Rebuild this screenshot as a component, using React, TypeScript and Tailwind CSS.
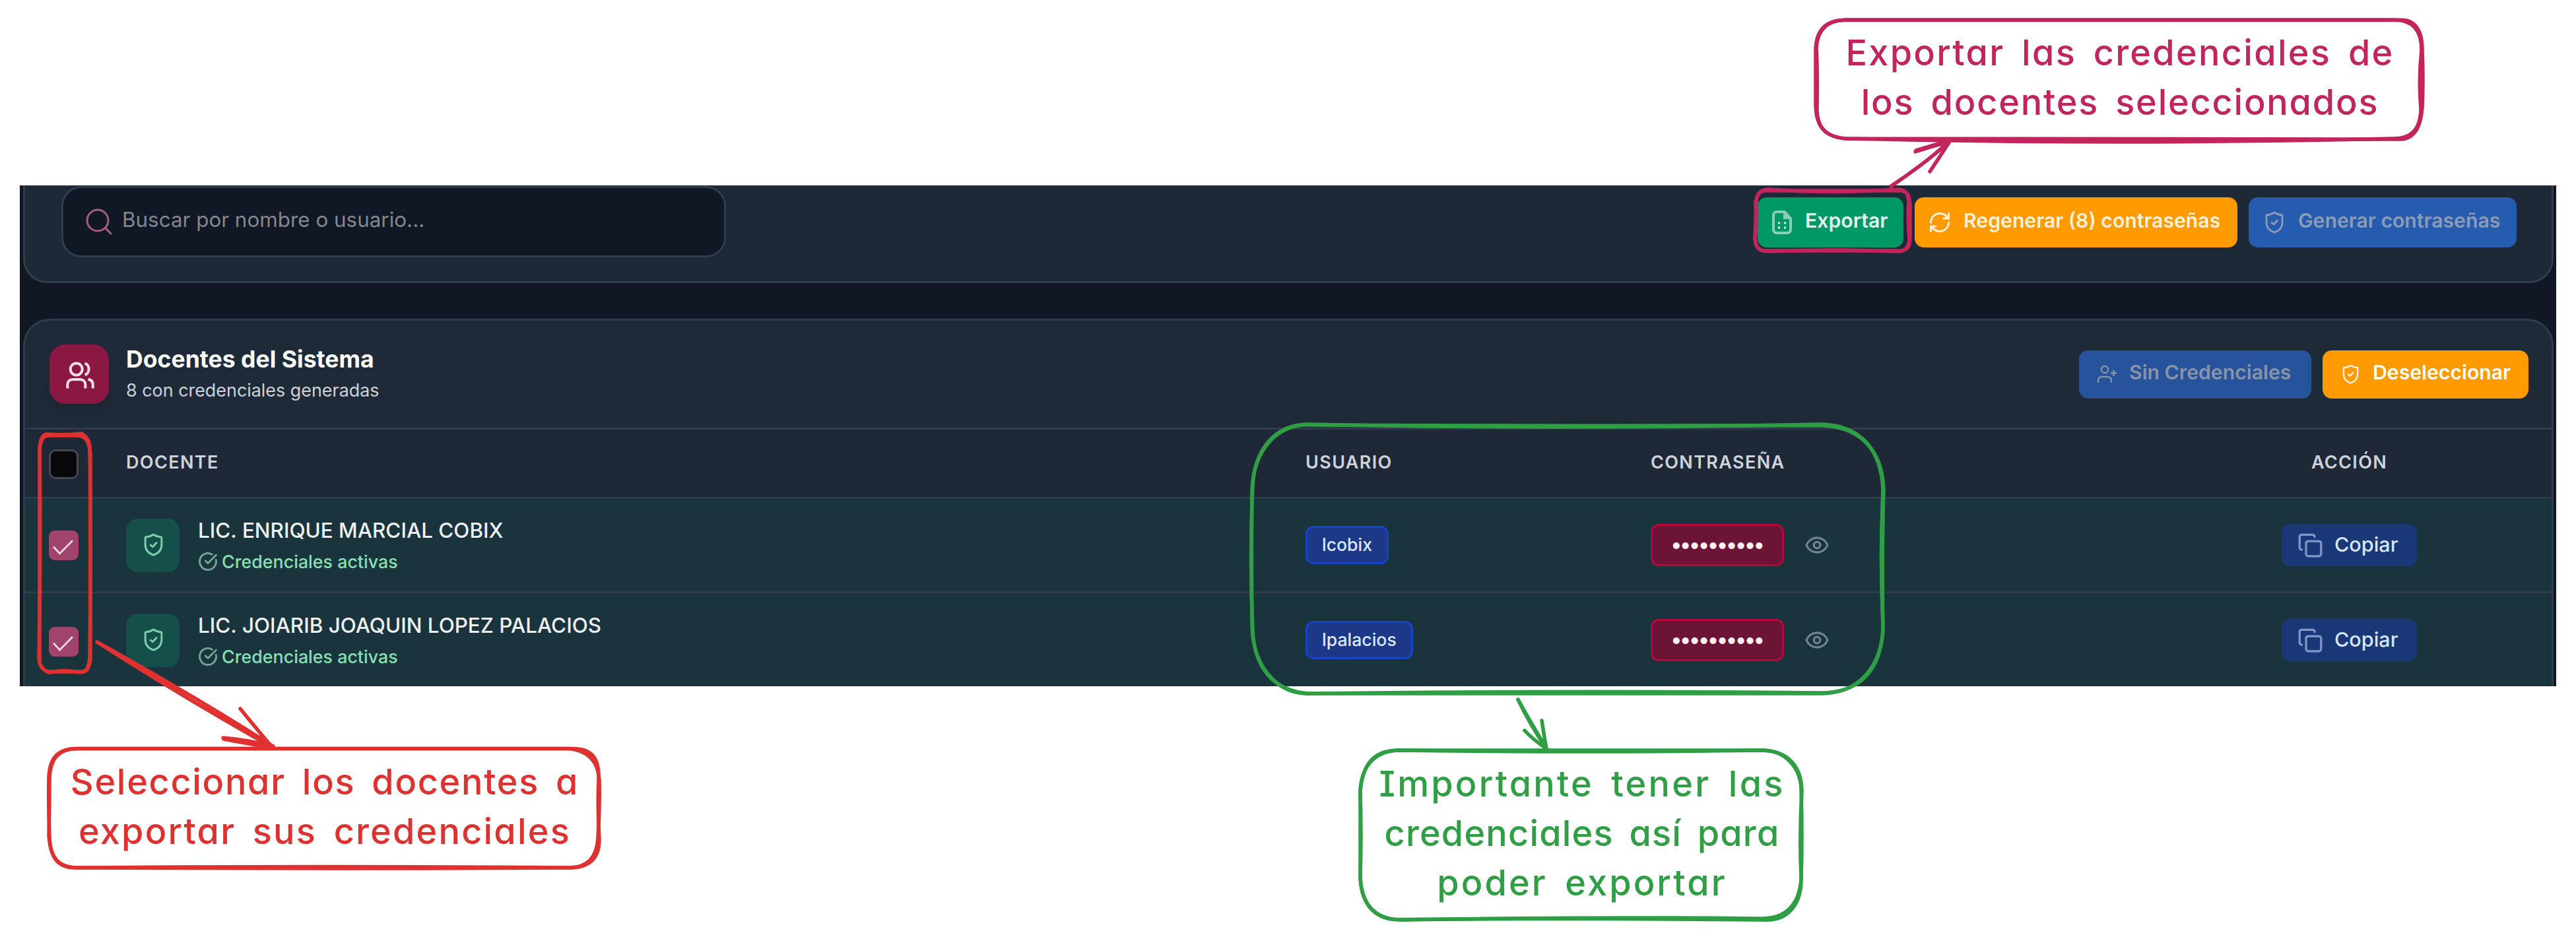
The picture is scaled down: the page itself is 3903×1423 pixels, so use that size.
import React from 'react';
import { CircleCheckBig, Copy, Eye, RefreshCw, Search } from 'lucide-react';

function ShieldIcon({ className }: { className: string }) {
  return (
    <svg viewBox="0 0 28 34" className={className} fill="none" stroke="currentColor" strokeWidth="2.8" strokeLinejoin="round">
      <path d="M14 2Q9 5.4 2 6v11c0 8 5.500 13 12 15.200C20.500 30 26 25 26 17V6Q19 5.400 14 2Z" />
      <path d="m9 16.800 4 3.200 6.200-6.600" />
    </svg>
  );
}

function UsersIcon() {
  return (
    <svg viewBox="0 0 90 90" className="size-[90px]" fill="none" stroke="currentColor" strokeWidth="4">
      <circle cx="40.700" cy="37.500" r="9" />
      <path d="M27.300 66.500V61c0-5 3-8 8-8h11c5 0 8 3 8 8v5.500" />
      <path d="M53.500 28.800c8 1.500 8 15.500 0 17.200M58.500 52.800c5 .7 7.200 4 7.200 8v5.700" />
    </svg>
  );
}

function SheetIcon() {
  return (
    <svg viewBox="0 0 30 36" className="h-[36px] w-[30px]" fill="none" stroke="currentColor" strokeWidth="4">
      <path d="M7 2h12l9 10v17a5 5 0 0 1-5 5H7a5 5 0 0 1-5-5V7a5 5 0 0 1 5-5Z" strokeLinejoin="round" />
      <path d="M17 3v10h10Z" fill="currentColor" stroke="none" />
      <path d="M9 19h3M18 19h3M9 26h3M18 26h3" stroke="#e2f5ee" strokeWidth="3" />
    </svg>
  );
}

function UserPlusIcon() {
  return (
    <svg viewBox="0 0 31 30" className="h-[30px] w-[31px]" fill="none" stroke="currentColor" strokeWidth="2.400">
      <circle cx="12" cy="8" r="5.200" />
      <path d="M2 28v-3c0-4 2.500-6 6-6h8c3.500 0 6 2 6 6v3M21 13.500h9M25.500 9v9" />
    </svg>
  );
}

function TopButton({ className, icon, label }: { className: string; icon: React.ReactNode; label: string }) {
  return (
    <button className={`flex items-center rounded-[14px] text-[30.200px] font-semibold whitespace-nowrap ${className}`}>
      {icon}
      <span className="pb-[5px] leading-none">{label}</span>
    </button>
  );
}

const teachers = [
  { name: 'LIC. ENRIQUE MARCIAL COBIX', user: 'lcobix', row: 'h-[143px] border-b-[3px] border-[#303b4b]', check: 'mt-0' },
  { name: 'LIC. JOIARIB JOAQUIN LOPEZ PALACIOS', user: 'lpalacios', row: 'h-[142px]', check: 'mt-[5px]' },
];

const columns = 'grid grid-cols-[153px_1787px_523px_752px_1fr] items-center';

function TeacherRow({ name, user, row, check }: (typeof teachers)[number]) {
  return (
    <div className={`${columns} bg-[#1a343d] ${row}`}>
      <div className={`ml-[36px] flex size-[45px] items-center justify-center rounded-[9px] bg-[#a1446b] text-[#efd3df] ${check}`}>
        <svg viewBox="0 0 45 45" className="size-[45px]" fill="none" stroke="currentColor" strokeWidth="2.800">
          <path d="m7 24.500 9.500 10.500L36 15" />
        </svg>
      </div>
      <div className="flex items-center">
        <div className="flex size-[81px] items-center justify-center rounded-[18px] bg-[#154f49] text-[#7fcfae]">
          <ShieldIcon className="h-[35px] w-[29px] translate-x-[1px] -translate-y-px" />
        </div>
        <div className="ml-[28px] pt-[3px]">
          <div className="text-[31.400px] leading-[47px] font-medium text-[#eef1f4]">{name}</div>
          <div className="flex items-center text-[26.800px] leading-[47px] font-medium text-[#86e0b4]">
            <CircleCheckBig size={30} strokeWidth={2.3} className="mr-[6px] text-[#72a797]" />
            {'Credenciales activas'}
          </div>
        </div>
      </div>
      <div>
        <span className="inline-flex h-[58px] items-center rounded-[12px] border-[3px] border-[#1743c8] bg-[#1c3887] px-[22px] align-middle text-[26.600px] font-medium text-[#dbe8fb]">
          {user}
        </span>
      </div>
      <div className="flex items-center">
        <span className="flex h-[64px] w-[202px] items-center justify-center rounded-[12px] border-[3px] border-[#b5073c] bg-[#6b1436] pb-[2px] text-[32px] font-bold tracking-[-1.200px] text-[#fff1f2]">
          ••••••••••
        </span>
        <Eye size={38} strokeWidth={2} className="ml-[31px] text-[#748390]" />
      </div>
      <div className="flex justify-center">
        <button className="flex h-[64px] w-[205px] items-center gap-[17px] rounded-[13px] bg-[#1a3878] pl-[24px] text-[30.500px] font-medium text-[#d5e6fb]">
          <Copy size={39} strokeWidth={2} className="text-[#8197c6]" />
          <span className="pb-[2px] leading-none">Copiar</span>
        </button>
      </div>
    </div>
  );
}

const hand = 'absolute text-center text-[54px] leading-[75px] font-medium whitespace-nowrap [font-feature-settings:"cv11","cv08"]';

/* Hand-drawn frames, arrows and notes laid over the panel. */
function Annotations() {
  return (
    <>
      <svg viewBox="0 0 3903 1423" className="absolute inset-0 h-[1423px] w-[3903px]" fill="none" strokeLinecap="round" strokeLinejoin="round">
        <g stroke="#c2255c" strokeWidth="5.500">
          <path d="M2798 30H3628C3656 30 3669 46 3669 76Q3664 120 3668 165C3667 196 3654 210 3626 210Q3210 220 2798 210C2766 208 2752 194 2753 160Q2754 110 2752 72C2754 44 2770 30 2798 30Z" />
          <path d="M2796 30.500H3634C3660 28 3671 48 3670 78Q3672 120 3670 163C3668 190 3660 212 3634 211Q3210 212 2796 210C2762 207 2751 188 2751 158Q2751 110 2751 74C2752 46 2766 30 2796 30.500Z" />
          <path d="M2678 287Q2776 294 2876 287C2890 288 2891 296 2892 306Q2890 335 2893 362C2892 376 2886 381 2874 381Q2776 377 2678 381C2664 380 2660 374 2659 362Q2663 335 2661 306C2662 294 2666 288 2678 287Z" />
          <path d="M2676 289H2878C2892 289 2893 298 2894 310V358C2894 374 2890 381 2876 380H2676C2662 381 2660 372 2659 358Q2661 330 2660 308C2661 296 2666 289 2676 289Z" />
          <path d="M2866 282Q2915 248 2953 216M2865 282Q2920 246 2953 214M2902 230Q2926 222 2952 215M2903 228L2950 214M2924 260Q2940 236 2953 216" />
        </g>
        <g stroke="#e03131" strokeWidth="5.500">
          <path d="M118 1134.500H866C896 1134 908 1148 907 1180Q905 1225 908 1272C908 1304 890 1315 862 1315Q490 1312 120 1315C88 1315 76 1300 75 1268Q73 1225 74 1176C76 1144 92 1134 118 1134.500Z" />
          <path d="M116 1134.500H862C890 1137 906 1152 908 1182Q909 1225 906 1270C904 1300 890 1315 862 1315Q490 1317 116 1315C86 1316 76 1298 74 1266Q75 1225 75 1180C76 1150 88 1135 116 1134.500Z" />
          <path d="M70 658Q98 660 124 657C134 664 137 672 136 684Q138 840 136 996C135 1010 132 1018 122 1019Q98 1014 74 1019C64 1014 59 1008 59 998Q62 840 60 684C60 672 62 660 70 658Z" />
          <path d="M74 660H120C132 662 135 672 137 688V1000C134 1014 132 1018 124 1018H72C64 1014 60 1010 60 1000V680C62 666 66 660 74 660Z" />
          <path d="M147 973Q280 1058 412 1132M147 973Q290 1052 414 1131M364 1074Q385 1100 412 1132M338 1118Q375 1121 412 1131M339 1120L410 1133" />
        </g>
        <g stroke="#2f9e44" strokeWidth="5.500">
          <path d="M1984 643Q2370 651 2758 643C2822 644 2850 684 2853 742Q2848 845 2853 952C2850 1014 2820 1050 2758 1050Q2370 1046 1984 1051C1928 1048 1900 1010 1898 954Q1893 845 1898 738C1900 684 1930 642 1984 643Z" />
          <path d="M1990 644Q2370 646 2758 644.500C2816 646 2852 680 2854 742Q2851 845 2853 954C2850 1010 2816 1052 2758 1051H1988C1932 1054 1898 1006 1897 948Q1896 845 1897 742C1900 680 1936 640 1990 644Z" />
          <path d="M2124 1137H2670C2708 1138 2730 1160 2730 1200Q2726 1265 2729 1332C2726 1372 2706 1393 2666 1392Q2395 1389 2124 1394C2082 1394 2063 1370 2061 1330Q2063 1265 2061 1196C2064 1158 2086 1136 2124 1137Z" />
          <path d="M2116 1137Q2395 1141 2672 1137C2706 1138 2728 1164 2729 1196Q2731 1265 2729 1336C2728 1372 2708 1396 2672 1394Q2395 1391 2116 1393.500C2080 1392 2062 1366 2061 1328V1200C2064 1160 2080 1138 2116 1137Z" />
          <path d="M2300 1060Q2318 1098 2343 1134M2300 1060Q2320 1096 2343 1134M2336 1092Q2339 1112 2343 1134M2310 1107Q2322 1120 2342 1134" />
        </g>
      </svg>
      <div className={`${hand} top-[42px] left-[2752px] w-[920px] text-[#c2255c]`}>
        <div className="tracking-[2.300px] [word-spacing:9px]">Exportar las credenciales de</div>
        <div className="tracking-[1.800px] [word-spacing:9px]">los docentes seleccionados</div>
      </div>
      <div className={`${hand} top-[1147px] left-[74px] w-[836px] text-[#e03131]`}>
        <div className="tracking-[1.700px] [word-spacing:9px]">Seleccionar los docentes a</div>
        <div className="tracking-[2.200px] [word-spacing:9px]">exportar sus credenciales</div>
      </div>
      <div className={`${hand} top-[1150px] left-[2061px] w-[672px] text-[#2f9e44]`}>
        <div className="tracking-[3.200px] [word-spacing:9px]">Importante tener las</div>
        <div className="tracking-[1.200px] [word-spacing:8px]">credenciales así para</div>
        <div className="tracking-[3.100px] [word-spacing:9px]">poder exportar</div>
      </div>
    </>
  );
}

export default function App() {
  return (
    <div className="relative h-[1423px] w-[3903px] overflow-hidden bg-white pt-[281px] pl-[30px] font-['Inter',sans-serif]">
      <main className="h-[759px] w-[3843px] overflow-hidden bg-[#101725] pr-[4px] pl-[5px]">
        <section className="flex h-[148px] items-start rounded-b-[36px] border-[3px] border-t-0 border-[#303b4b] bg-[#1e2938] pr-[53px] pl-[55px]">
          <div className="mt-px flex h-[108px] w-[1007px] items-center rounded-[30px] border-[3px] border-[#303b4b] bg-[#101725] pl-[30px]">
            <Search size={48} strokeWidth={1.5} className="text-[#a65f7b]" />
            <span className="ml-[11px] pb-[4px] text-[31.400px] text-[#84878f]">Buscar por nombre o usuario...</span>
          </div>
          <div className="mt-[18px] ml-auto flex gap-[17px]">
            <TopButton
              className="h-[76px] w-[221px] gap-[20px] bg-[#009966] pl-[22px] text-[#e2f5ee]"
              icon={<span className="text-[#85d0b6]"><SheetIcon /></span>}
              label="Exportar"
            />
            <TopButton
              className="h-[76px] w-[489px] gap-[18px] bg-[#ff9a00] pl-[20px] text-[#fff1d9]"
              icon={<RefreshCw size={36} strokeWidth={2} />}
              label="Regenerar (8) contraseñas"
            />
            <TopButton
              className="h-[76px] w-[406px] gap-[22px] bg-[#255cb0] pl-[25px] text-[#8c9bb3]"
              icon={<ShieldIcon className="h-[34px] w-[28px]" />}
              label="Generar contraseñas"
            />
          </div>
        </section>

        <section className="mt-[54px] rounded-t-[40px] border-[3px] border-b-0 border-[#303b4b] bg-[#1f2a39]">
          <header className="flex h-[165px] items-center border-b-[3px] border-[#303b4b] pr-[35px] pl-[37px]">
            <div className="size-[90px] rounded-[24px] bg-[#8a1843] text-[#f5dce5] shadow-lg">
              <UsersIcon />
            </div>
            <div className="ml-[26px] pt-[2px]">
              <h1 className="text-[35.600px] leading-[46px] font-bold text-white">Docentes del Sistema</h1>
              <p className="text-[26.900px] leading-[46px] text-[#ccd2da]">8 con credenciales generadas</p>
            </div>
            <div className="ml-auto flex gap-[17px]">
              <TopButton
                className="h-[73px] w-[352px] gap-[18px] bg-[#26539b] pl-[27px] text-[#8793a6]"
                icon={<UserPlusIcon />}
                label="Sin Credenciales"
              />
              <TopButton
                className="h-[73px] w-[312px] gap-[21px] bg-[#ff9a00] pl-[30px] text-white"
                icon={<ShieldIcon className="h-[30px] w-[25px] text-[#fff1d9]" />}
                label="Deseleccionar"
              />
            </div>
          </header>

          <div className={`${columns} h-[105px] border-b-[3px] border-[#303b4b] bg-[#1e2837] text-[27px] font-semibold tracking-wider text-[#cdd3db]`}>
            <div className="mt-[2px] ml-[36px] size-[45px] rounded-[10px] border-[3px] border-[#45484e] bg-[#09090b]" />
            <div className="pb-[2px]">DOCENTE</div>
            <div className="pb-[2px]">USUARIO</div>
            <div className="pb-[2px]">CONTRASEÑA</div>
            <div className="pb-[2px] text-center">ACCIÓN</div>
          </div>
          {teachers.map((t) => (
            <TeacherRow key={t.user} {...t} />
          ))}
        </section>
      </main>
      <Annotations />
    </div>
  );
}
